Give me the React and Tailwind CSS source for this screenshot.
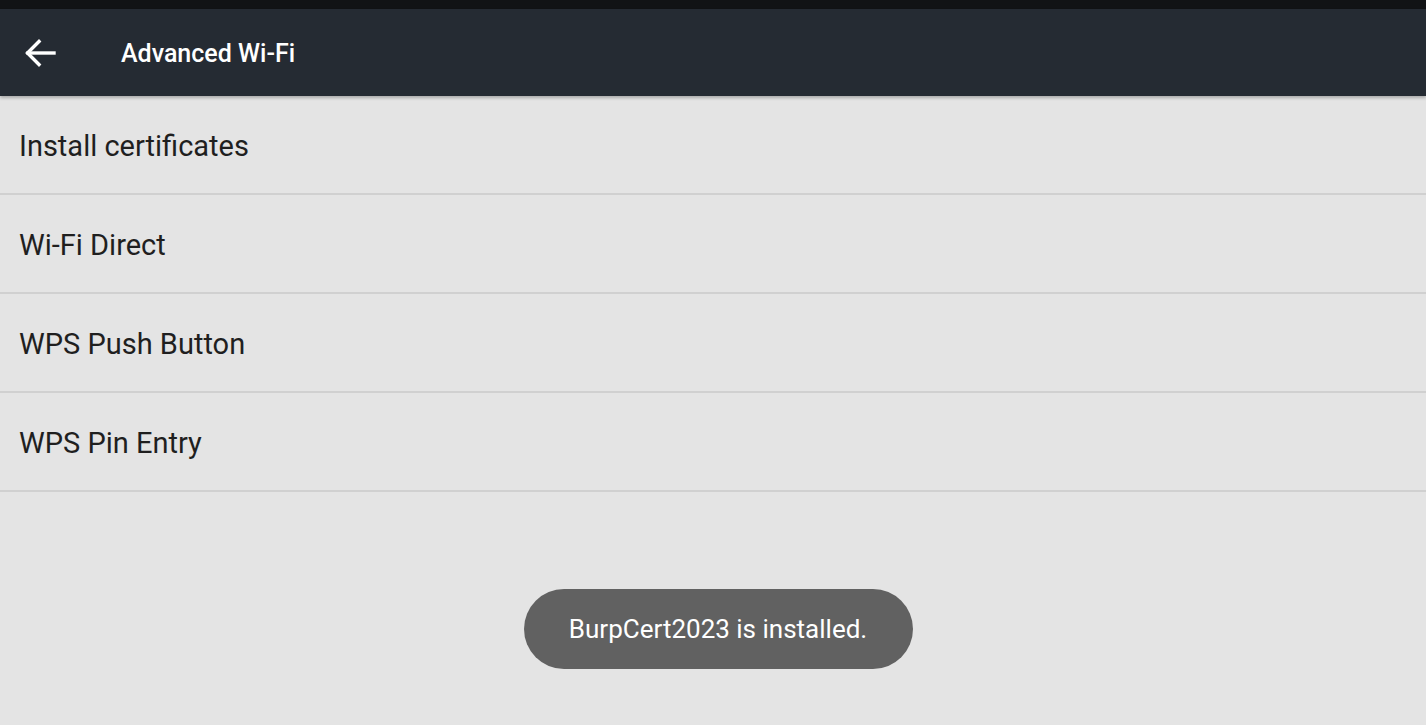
const ITEMS = ["Install certificates", "Wi-Fi Direct", "WPS Push Button", "WPS Pin Entry"];

function BackArrow() {
  return (
    <svg width="32" height="30" viewBox="0 0 32 30" fill="none" stroke="white" strokeWidth="3.4" strokeLinecap="square">
      <path d="M4 15H30" />
      <path d="M15 3.5L3.5 15L15 26.5" strokeLinejoin="miter" />
    </svg>
  );
}

export default function App() {
  return (
    <div className="h-[725px] w-[1426px] overflow-hidden bg-[#e4e4e4] flex flex-col" style={{ fontFamily: "Roboto, 'Noto Sans', sans-serif" }}>
      {/* status bar */}
      <div className="h-[9px] bg-[#111315] shrink-0" />

      {/* toolbar */}
      <div className="h-[87px] bg-[#252b33] flex items-center shrink-0 shadow-[0_2px_3px_rgba(0,0,0,0.25)] relative z-10">
        <div className="pl-[24px] pt-[1px]">
          <BackArrow />
        </div>
        <span className="ml-[65px] pt-[2px] text-[25px] font-medium text-white">Advanced Wi-Fi</span>
      </div>

      {/* list */}
      <div className="flex flex-col">
        {ITEMS.map((label) => (
          <div key={label} className="h-[99px] flex items-center px-[19px] border-b-2 border-[#d0d0d0] pt-[5px]">
            <span className="text-[29px] text-[#1f1f1f]">{label}</span>
          </div>
        ))}
      </div>

      {/* toast */}
      <div className="flex-1 flex justify-center pt-[97px]">
        <div className="h-[80px] w-[389px] ml-[10px] rounded-full bg-[#616161] flex items-center justify-center">
          <span className="text-[26px] text-white">BurpCert2023 is installed.</span>
        </div>
      </div>
    </div>
  );
}
